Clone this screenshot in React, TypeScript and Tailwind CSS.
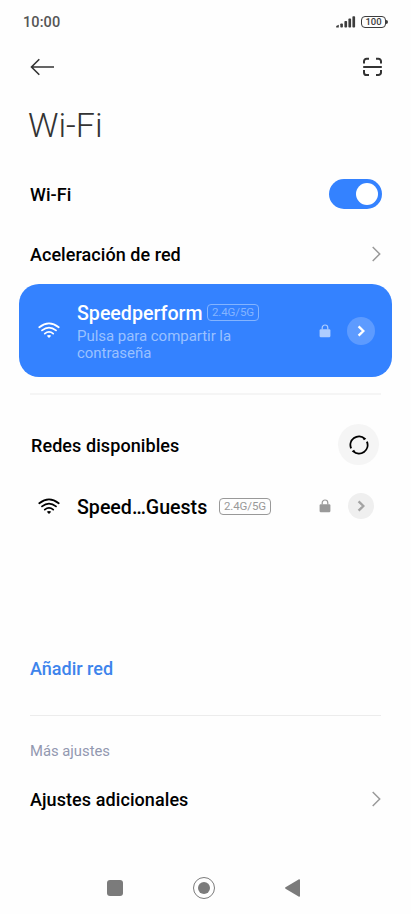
import { useState } from "react";

function SignalIcon() {
  return (
    <svg width={20} height={12} viewBox="0 0 20 12" fill="#3c3c3c">
      <path d="M0.2 11.5V10l2.6-1.2v2.7z" />
      <rect x="4.3" y="7.4" width="2.6" height="4.1" rx="0.8" />
      <rect x="8.4" y="5" width="2.7" height="6.5" rx="0.8" />
      <rect x="12.4" y="2.6" width="2.7" height="8.9" rx="0.8" />
      <rect x="16.4" y="0.2" width="2.7" height="11.3" rx="0.8" />
    </svg>
  );
}

function WifiIcon() {
  return (
    <svg width={22} height={17} viewBox="0 0 22 17" fill="none" stroke="currentColor" strokeWidth="1.8" strokeLinecap="round">
      <path d="M1.3 5.2Q11 -2.3 20.7 5.2" />
      <path d="M4 8.4Q11 2.8 18 8.4" />
      <path d="M6.8 11.6Q11 8.2 15.2 11.6" />
      <path d="M8.8 13.8Q11 12.2 13.2 13.8L11 16.1z" fill="currentColor" stroke="none" />
    </svg>
  );
}

function LockIcon() {
  return (
    <svg width={12} height={14} viewBox="0 0 12 14" fill="none">
      <rect x="0.6" y="5.2" width="10.8" height="8" rx="1.2" fill="currentColor" />
      <path d="M3.2 5.6V3.8a2.8 2.8 0 0 1 5.6 0v1.8" stroke="currentColor" strokeWidth="1.2" />
    </svg>
  );
}

function Chevron() {
  return (
    <svg width={10} height={16} viewBox="0 0 10 16" fill="none" stroke="#9a9a9a" strokeWidth="1.5">
      <path d="M0.7 1L7.7 8L0.7 15" />
    </svg>
  );
}

function SmallChevron() {
  return (
    <svg width={8} height={12} viewBox="0 0 8 12" fill="none" stroke="currentColor" strokeWidth="2.4">
      <path d="M1.6 1.3L6.4 6L1.6 10.7" />
    </svg>
  );
}

export default function App() {
  const [enabled, setEnabled] = useState(true);

  return (
    <main className="flex h-[914px] w-[411px] flex-col overflow-hidden bg-[#fefefe] font-['Roboto',sans-serif] text-black">
      {/* STATUS BAR */}
      <div className="flex h-11 shrink-0 items-center justify-between pl-[23px] pr-[23px]">
        <span className="pt-[2px] text-[14.5px] font-medium tracking-[0.1px] text-[#555]">10:00</span>
        <div className="flex items-center gap-[5px]">
          <SignalIcon />
          <div className="flex items-center">
            <span className="flex h-3 w-[25px] items-center justify-center rounded-[4px] border border-[#3c3c3c] text-[9.5px] font-medium leading-none text-[#3c3c3c]">
              100
            </span>
            <span className="h-1 w-[2px] rounded-r-sm bg-[#3c3c3c]" />
          </div>
        </div>
      </div>

      {/* HEADER */}
      <header className="flex h-[46px] shrink-0 items-center justify-between pl-[30px] pr-[29px]">
        <button aria-label="Atrás">
          <svg width={25} height={18} viewBox="0 0 25 18" fill="none" stroke="#333" strokeWidth="1.6">
            <path d="M24 9H1.5M9.3 1.2L1.5 9l7.8 7.8" />
          </svg>
        </button>
        <button aria-label="Escanear código QR">
          <svg width={20} height={20} viewBox="0 0 20 20" fill="none" stroke="#333" strokeWidth="2">
            <path d="M2 6.5V4.3a2.6 2.6 0 0 1 2.6-2.6H7M14 1.7h2.4A2.6 2.6 0 0 1 19 4.3V6.5M19 13v2.4a2.6 2.6 0 0 1-2.6 2.6H14M7 18H4.6A2.6 2.6 0 0 1 2 15.4V13M1.2 10h18.6" />
          </svg>
        </button>
      </header>

      <h1 className="mt-3 h-[46px] shrink-0 pl-7 text-[34px] font-light leading-[46px] text-[#333]">Wi-Fi</h1>

      {/* WI-FI SETTINGS */}
      <div className="mt-4 flex h-[60px] shrink-0 items-center justify-between pl-[30px] pr-[29px]">
        <span className="pt-[2px] text-lg font-medium tracking-[0.05px]">Wi-Fi</span>
        <button
          role="switch"
          aria-checked={enabled}
          onClick={() => setEnabled(!enabled)}
          className={`flex h-[30px] w-[53px] items-center rounded-full px-1 ${enabled ? "justify-end bg-[#3482ff]" : "justify-start bg-gray-300"}`}
        >
          <span className="h-[22px] w-[22px] rounded-full bg-white" />
        </button>
      </div>
      <div className="flex h-[60px] shrink-0 items-center justify-between pl-[30px] pr-[29px]">
        <span className="pt-px text-lg font-medium tracking-[0.05px]">Aceleración de red</span>
        <Chevron />
      </div>

      {/* CONNECTED NETWORK */}
      <section className="ml-[19px] flex h-[93px] w-[373px] shrink-0 items-center rounded-[20px] bg-[#3482ff] pl-[19px] pr-[17px] text-white">
        <WifiIcon />
        <div className="ml-[17px] w-[200px] pt-[2px]">
          <div className="flex items-center">
            <span className="w-[130px] pt-px text-[19.6px] font-medium leading-6">Speedperform</span>
            <span className="mb-px flex h-[17px] w-[52px] shrink-0 items-center justify-center rounded-[4px] border border-[#84b4ff] pt-px text-[11.5px] leading-none tracking-[-0.1px] text-[#84b4ff]">
              2.4G/5G
            </span>
          </div>
          <p className="mt-[2px] w-[170px] text-[15px] leading-[17.5px] tracking-[-0.04px] text-[#9ac1ff]">Pulsa para compartir la contraseña</p>
        </div>
        <div className="ml-auto flex items-center gap-4">
          <span className="text-[#aecdff]"><LockIcon /></span>
          <span className="flex h-7 w-7 items-center justify-center rounded-full bg-[#5d9bff]">
            <SmallChevron />
          </span>
        </div>
      </section>

      <hr className="mx-[30px] mt-4 shrink-0 border-t-2 border-[#f5f5f5]" />

      {/* AVAILABLE NETWORKS */}
      <div className="mt-[29px] flex h-[41px] shrink-0 items-center justify-between pl-[31px] pr-8">
        <h2 className="pt-[2px] text-lg font-medium tracking-[0.08px]">Redes disponibles</h2>
        <button aria-label="Actualizar" className="flex h-[41px] w-[41px] items-center justify-center rounded-full bg-[#f5f5f5]">
          <svg width={20} height={20} viewBox="0 0 20 20" fill="none" stroke="#000" strokeWidth="1.9">
            <path d="M2.1 13.4A8.6 8.6 0 0 1 15.7 3.6L14.4 4.5" />
            <path d="M17.9 6.6A8.6 8.6 0 0 1 4.3 16.4L5.6 15.5" />
          </svg>
        </button>
      </div>
      <div className="mt-[21px] flex h-10 shrink-0 items-center pl-[38px] pr-[37px]">
        <WifiIcon />
        <span className="ml-[17px] w-[130px] whitespace-nowrap pt-[3px] text-[19.6px] font-medium leading-6">Speed…Guests</span>
        <span className="ml-3 flex h-[17px] w-[52px] shrink-0 items-center justify-center rounded-[4px] border border-[#999] pt-px text-[11.5px] leading-none tracking-[-0.1px] text-[#999]">
          2.4G/5G
        </span>
        <div className="ml-auto flex items-center gap-[17px]">
          <span className="text-[#999]"><LockIcon /></span>
          <span className="flex h-[26px] w-[26px] items-center justify-center rounded-full bg-[#efefef] text-[#a3a3a3]">
            <SmallChevron />
          </span>
        </div>
      </div>

      <a className="mt-32 flex h-[30px] shrink-0 items-center pl-[30px] text-lg font-medium text-[#3d84ec]">Añadir red</a>

      <hr className="mx-[30px] mt-[31px] shrink-0 border-[#ececec]" />

      {/* MORE SETTINGS */}
      <h3 className="mt-[25px] flex h-5 shrink-0 items-center pl-[30px] text-[14.8px] text-[#9298b0]">Más ajustes</h3>
      <div className="mt-[18px] flex h-10 shrink-0 items-center justify-between pl-[30px] pr-[29px]">
        <span className="pt-px text-lg font-medium tracking-[0.08px]">Ajustes adicionales</span>
        <Chevron />
      </div>

      {/* NAVIGATION BAR */}
      <nav className="mt-auto flex h-[52px] shrink-0 items-center pl-[107px]">
        <span className="h-4 w-4 rounded-[3px] bg-[#7b7b7b]" />
        <span className="ml-[70px] flex h-[22px] w-[22px] items-center justify-center rounded-full border-[1.5px] border-[#7b7b7b]">
          <span className="h-3 w-3 rounded-full bg-[#7b7b7b]" />
        </span>
        <svg className="ml-[70px]" width={15} height={18} viewBox="0 0 15 18" fill="#7b7b7b">
          <path d="M0.5 8.3L14 0.2Q15 0 15 1V17Q15 18 14 17.8L0.5 9.7Q-0.3 9 0.5 8.3z" />
        </svg>
      </nav>
    </main>
  );
}
